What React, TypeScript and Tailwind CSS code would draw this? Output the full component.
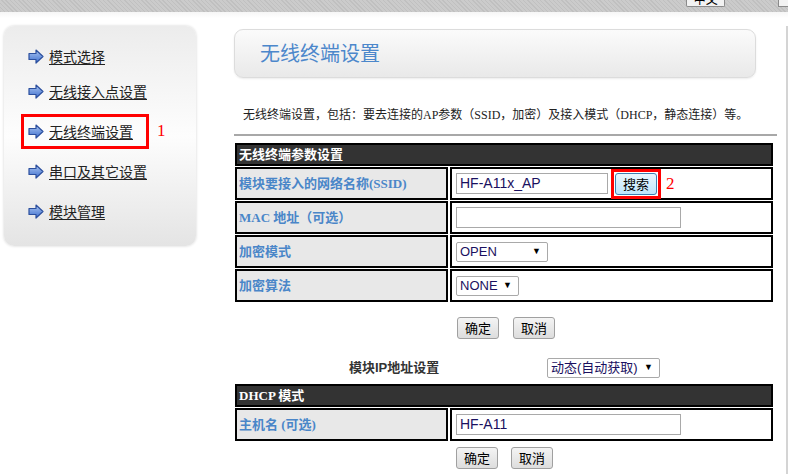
import React from "react";

const cjk = { fontFamily: '"Noto Sans CJK SC", sans-serif' };
const serifCjk = { fontFamily: '"Liberation Serif", "Noto Sans CJK SC", serif' };
const sansCjk = { fontFamily: '"Liberation Sans", "Noto Sans CJK SC", sans-serif' };

function Arrow() {
  return (
    <svg width="16" height="15" viewBox="0 0 16 15" className="shrink-0">
      <defs>
        <linearGradient id="arr" x1="0" y1="0" x2="0" y2="1">
          <stop offset="0" stopColor="#a9c4f0" />
          <stop offset="1" stopColor="#3f70cf" />
        </linearGradient>
      </defs>
      <polygon
        points="1,4.5 8,4.5 8,1 15,7.5 8,14 8,10.5 1,10.5"
        fill="url(#arr)"
        stroke="#2b4f9e"
        strokeWidth="1.2"
        strokeLinejoin="round"
      />
    </svg>
  );
}

const menu = ["模式选择", "无线接入点设置", "无线终端设置", "串口及其它设置", "模块管理"];

function Btn({ children, active }: { children: React.ReactNode; active?: boolean }) {
  return (
    <div
      className={
        "h-[22px] w-[42px] flex items-center justify-center rounded-[3px] border text-[13px] text-black " +
        (active
          ? "border-[#3c7fb1] bg-gradient-to-b from-[#eaf6fd] to-[#bee6fd]"
          : "border-[#a0a0a0] bg-gradient-to-b from-[#f4f4f4] to-[#dddddd]")
      }
      style={cjk}
    >
      {children}
    </div>
  );
}

function Select({ value, w }: { value: string; w: string }) {
  return (
    <div
      className={"h-[20px] flex items-center justify-between border border-[#a9a9a9] rounded-[2px] bg-white pl-[3px] pr-[6px] text-[13px] text-[#1a1060] " + w}
      style={sansCjk}
    >
      <span>{value}</span>
      <span className="text-[9px] text-black">▼</span>
    </div>
  );
}

function Label({ children }: { children: React.ReactNode }) {
  return (
    <div
      className="h-[33px] border-2 border-black bg-[#e8e8e8] flex items-center pl-[2px] text-[13px] font-bold text-[#4a86c8]"
      style={serifCjk}
    >
      {children}
    </div>
  );
}

function Cell({ children }: { children?: React.ReactNode }) {
  return <div className="h-[33px] border-2 border-black bg-white flex items-center pl-[4px]">{children}</div>;
}

function Input({ value, w }: { value?: string; w: string }) {
  return (
    <div
      className={"h-[21px] border border-[#a9a9a9] bg-white flex items-center pl-[3px] text-[14px] text-[#1a1060] " + w}
      style={sansCjk}
    >
      {value}
    </div>
  );
}

function Header({ children }: { children: React.ReactNode }) {
  return (
    <div
      className="col-span-2 h-[23px] border-2 border-black bg-[#333333] flex items-center pl-[2px] text-[13px] font-bold text-white"
      style={serifCjk}
    >
      {children}
    </div>
  );
}

export default function App() {
  return (
    <div className="w-[788px] h-[474px] overflow-hidden bg-white flex flex-col">
      <div className="h-[12px] shrink-0 bg-[#c6c6c6] bg-[repeating-linear-gradient(45deg,#c0c0c0_0px,#c0c0c0_1px,#cbcbcb_1px,#cbcbcb_3px)] flex items-start overflow-hidden">
        <div className="ml-[686px] w-[41px] h-[7px] border border-t-0 border-[#8a8a8a] bg-[#f2f2f2] rounded-b-[2px] overflow-hidden flex justify-center">
          <span className="text-[12px] leading-[12px] -mt-[7px] text-black" style={cjk}>中文</span>
        </div>
        <div className="ml-[53px] w-[10px] h-[7px] border border-t-0 border-r-0 border-[#8a8a8a] bg-[#f2f2f2]" />
      </div>

      <div className="flex flex-1 bg-gradient-to-b from-[#f6f6f6] to-white to-[6px]">
        <div className="pl-[4px] pt-[14px] w-[196px] shrink-0">
          <div className="w-[192px] h-[220px] rounded-[10px] bg-gradient-to-b from-[#ececec] via-[#fdfdfd] via-50% to-[#e4e4e4] shadow-[0_0_3px_rgba(0,0,0,0.18)] pt-[15px] pl-[24px]">
            {menu.map((m, i) => (
              <div key={m} className={"flex items-center " + (i === 0 ? "h-[30px]" : "h-[40px]")}>
                <div
                  className={
                    "flex items-center gap-[5px] " +
                    (i === 2 ? "-ml-[7px] pl-[4px] pr-[13px] h-[35px] border-[3px] border-[#ff0000]" : "h-[16px]")
                  }
                >
                  <Arrow />
                  <span className="text-[14px] leading-[14px] text-[#222] underline underline-offset-2" style={cjk}>
                    {m}
                  </span>
                </div>
                {i === 2 && (
                  <span className="ml-[8px] text-[17px] text-[#ff0000]" style={serifCjk}>1</span>
                )}
              </div>
            ))}
          </div>
        </div>

        <div className="ml-[38px] w-[543px] shrink-0">
          <div className="mt-[17px] w-[522px] h-[49px] rounded-[9px] border border-[#dcdcdc] bg-gradient-to-b from-[#fbfbfb] to-[#e9e9e9] shadow-[0_1px_2px_rgba(0,0,0,0.08)] flex items-center pl-[25px]">
            <span className="text-[20px] text-[#4c87cb]" style={serifCjk}>无线终端设置</span>
          </div>

          <div className="mt-[30px] pl-[9px] h-[14px] leading-[14px] text-[12px] text-[#222] whitespace-nowrap" style={serifCjk}>
            无线终端设置，包括：要去连接的AP参数（SSID，加密）及接入模式（DHCP，静态连接）等。
          </div>

          <div className="mt-[12px] h-[2px] bg-[#a8a8a8]" />

          <div className="mt-[7px] ml-[1px] grid grid-cols-[213px_323px] gap-x-[2px] gap-y-[1px]">
            <Header>无线终端参数设置</Header>
            <Label>模块要接入的网络名称(SSID)</Label>
            <Cell>
              <Input value="HF-A11x_AP" w="w-[152px]" />
              <div className="ml-[3px] border-[3px] border-[#ff0000] p-px">
                <Btn active>搜索</Btn>
              </div>
              <span className="ml-[5px] text-[17px] text-[#ff0000]" style={serifCjk}>2</span>
            </Cell>
            <Label>MAC 地址（可选）</Label>
            <Cell>
              <Input w="w-[225px]" />
            </Cell>
            <Label>加密模式</Label>
            <Cell>
              <Select value="OPEN" w="w-[92px]" />
            </Cell>
            <Label>加密算法</Label>
            <Cell>
              <Select value="NONE" w="w-[63px]" />
            </Cell>
          </div>

          <div className="mt-[15px] ml-[223px] flex gap-[14px]">
            <Btn>确定</Btn>
            <Btn>取消</Btn>
          </div>

          <div className="mt-[19px] flex items-center h-[19px]">
            <span className="ml-[115px] w-[198px] text-[13px] font-bold text-[#333]" style={sansCjk}>
              模块IP地址设置
            </span>
            <Select value="动态(自动获取)" w="w-[113px]" />
          </div>

          <div className="mt-[7px] ml-[1px] grid grid-cols-[213px_323px] gap-x-[2px] gap-y-[1px]">
            <Header>DHCP 模式</Header>
            <Label>主机名 (可选)</Label>
            <Cell>
              <Input value="HF-A11" w="w-[225px]" />
            </Cell>
          </div>

          <div className="mt-[6px] ml-[222px] flex gap-[13px]">
            <Btn>确定</Btn>
            <Btn>取消</Btn>
          </div>
        </div>

        <div className="ml-[9px] mt-[14px] w-[2px] bg-[#d4d4d4]" />
      </div>
    </div>
  );
}
